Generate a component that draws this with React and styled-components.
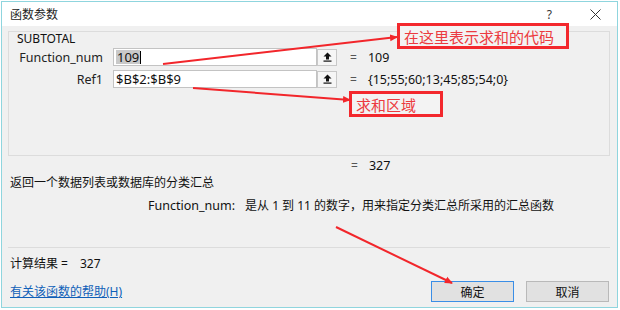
import React from 'react';
import styled, { createGlobalStyle } from 'styled-components';

const GlobalStyle = createGlobalStyle`
  html, body {
    margin: 0;
    padding: 0;
    background: #ffffff;
  }
  body {
    font-family: 'Noto Sans', 'Noto Sans CJK SC', sans-serif;
    font-size: 12px;
    color: #1a1a1a;
  }
`;

const args = [
  { name: 'Function_num', value: '109', result: '109', selected: true },
  { name: 'Ref1', value: '$B$2:$B$9', result: '{15;55;60;13;45;85;54;0}' },
];

const callouts = [
  { text: '在这里表示求和的代码', left: 397, top: 23, width: 172 },
  { text: '求和区域', left: 349, top: 91, width: 94 },
];

const arrows = [
  { x1: 163, y1: 64, x2: 397, y2: 37 },
  { x1: 193, y1: 88, x2: 350, y2: 100 },
  { x1: 336, y1: 227, x2: 452, y2: 283 },
];

export default function App() {
  return (
    <>
      <GlobalStyle />
      <Page>
        <Dialog>
          <TitleBar>
            <Title>函数参数</Title>
            <TitleTools>
              <HelpMark>?</HelpMark>
              <svg width="11" height="11" viewBox="0 0 11 11">
                <path d="M0.5 0.5 L10.5 10.5 M10.5 0.5 L0.5 10.5" stroke="#333" strokeWidth="1" />
              </svg>
            </TitleTools>
          </TitleBar>

          <Body>
            <GroupBox>
              <GroupTitle>SUBTOTAL</GroupTitle>
              <ArgList>
                {args.map((arg) => (
                  <ArgRow key={arg.name}>
                    <ArgLabel>{arg.name}</ArgLabel>
                    <Field>
                      {arg.selected ? (
                        <>
                          <Selection>{arg.value}</Selection>
                          <Caret />
                        </>
                      ) : (
                        arg.value
                      )}
                    </Field>
                    <CollapseButton>
                      <svg width="9" height="10" viewBox="0 0 9 10">
                        <path d="M4.5 0.5 L8.5 4.5 L6 4.5 L6 7.5 L3 7.5 L3 4.5 L0.5 4.5 Z" fill="#111" />
                        <rect x="0.5" y="8.5" width="8" height="1.2" fill="#111" />
                      </svg>
                    </CollapseButton>
                    <Equals>=</Equals>
                    <ArgResult>{arg.result}</ArgResult>
                  </ArgRow>
                ))}
              </ArgList>
            </GroupBox>

            <FormulaResult>
              <Equals>=</Equals>
              <ArgResult>327</ArgResult>
            </FormulaResult>

            <Description>返回一个数据列表或数据库的分类汇总</Description>

            <ArgHelp>
              <ArgHelpName>Function_num:</ArgHelpName>
              <span>是从 1 到 11 的数字，用来指定分类汇总所采用的汇总函数</span>
            </ArgHelp>

            <Separator />

            <Footer>
              <FooterInfo>
                <CalcResult>
                  计算结果 =<CalcValue>327</CalcValue>
                </CalcResult>
                <HelpLink href="#">有关该函数的帮助(H)</HelpLink>
              </FooterInfo>
              <Buttons>
                <DialogButton $primary>确定</DialogButton>
                <DialogButton>取消</DialogButton>
              </Buttons>
            </Footer>
          </Body>
        </Dialog>

        {callouts.map((c) => (
          <Callout key={c.text} style={{ left: c.left, top: c.top, width: c.width }}>
            {c.text}
          </Callout>
        ))}

        <ArrowLayer width="620" height="310" viewBox="0 0 620 310">
          <defs>
            <marker id="head" markerWidth="8" markerHeight="8" refX="7" refY="4" orient="auto" markerUnits="userSpaceOnUse">
              <path d="M0 0.5 L8 4 L0 7.5 Z" fill="#f2262b" />
            </marker>
          </defs>
          {arrows.map((a, i) => (
            <line
              key={i}
              x1={a.x1}
              y1={a.y1}
              x2={a.x2}
              y2={a.y2}
              stroke="#f2262b"
              strokeWidth="2"
              markerEnd="url(#head)"
            />
          ))}
        </ArrowLayer>
      </Page>
    </>
  );
}

const Page = styled.div`
  position: relative;
  width: 620px;
  height: 310px;
  padding: 1px 2px 2px 1px;
  box-sizing: border-box;
  overflow: hidden;
`;

const Dialog = styled.div`
  box-sizing: border-box;
  width: 617px;
  height: 307px;
  border: 1px solid #8fd5de;
  background: #f0f0f0;
  display: flex;
  flex-direction: column;
`;

const TitleBar = styled.div`
  height: 24px;
  flex: none;
  background: #ffffff;
  display: flex;
  align-items: center;
  justify-content: space-between;
  padding: 0 16px 0 8px;
`;

const Title = styled.div`
  font-size: 12px;
  color: #222;
`;

const TitleTools = styled.div`
  display: flex;
  align-items: center;
  gap: 38px;
`;

const HelpMark = styled.span`
  font-size: 12px;
  color: #333;
`;

const Body = styled.div`
  flex: 1;
  display: flex;
  flex-direction: column;
  padding: 0 7px 5px 6px;
`;

const GroupBox = styled.div`
  margin-top: 5px;
  height: 125px;
  box-sizing: border-box;
  border: 1px solid #dcdcdc;
  padding: 0 8px;
`;

const GroupTitle = styled.div`
  font-size: 12px;
  line-height: 14px;
  color: #111;
  margin-bottom: 2px;
`;

const ArgList = styled.div`
  display: flex;
  flex-direction: column;
  gap: 4px;
`;

const ArgRow = styled.div`
  display: flex;
  align-items: center;
  height: 18px;
`;

const ArgLabel = styled.div`
  width: 86px;
  margin-right: 10px;
  text-align: right;
  font-size: 12.5px;
  color: #222;
`;

const Field = styled.div`
  box-sizing: border-box;
  width: 204px;
  height: 18px;
  border: 1px solid #c3c3c3;
  background: #ffffff;
  display: flex;
  align-items: center;
  padding-left: 2px;
  font-size: 13px;
  color: #111;
`;

const Selection = styled.span`
  background: #c9c9c9;
  line-height: 14px;
  padding: 0 1px;
`;

const Caret = styled.span`
  width: 1px;
  height: 13px;
  background: #000;
`;

const CollapseButton = styled.div`
  box-sizing: border-box;
  width: 20px;
  height: 17px;
  border: 1px solid #c8c8c8;
  background: #f6f6f6;
  display: flex;
  align-items: center;
  justify-content: center;
`;

const Equals = styled.span`
  margin-left: 13px;
  color: #555;
  font-size: 12px;
`;

const ArgResult = styled.span`
  margin-left: 11px;
  font-size: 12.5px;
  color: #111;
`;

const FormulaResult = styled.div`
  margin-top: 3px;
  padding-left: 330px;
  line-height: 14px;
`;

const Description = styled.div`
  margin-top: 3px;
  padding-left: 2px;
  line-height: 14px;
  color: #111;
`;

const ArgHelp = styled.div`
  margin-top: 9px;
  padding-left: 140px;
  line-height: 14px;
  display: flex;
  gap: 10px;
  color: #111;
`;

const ArgHelpName = styled.span`
  font-size: 12.5px;
`;

const Separator = styled.div`
  margin-top: auto;
  height: 1px;
  background: #dcdcdc;
`;

const Footer = styled.div`
  height: 54px;
  display: flex;
  justify-content: space-between;
  align-items: flex-end;
  padding-right: 1px;
`;

const FooterInfo = styled.div`
  display: flex;
  flex-direction: column;
  gap: 14px;
  padding-left: 2px;
  padding-bottom: 3px;
`;

const CalcResult = styled.div`
  line-height: 14px;
  color: #111;
`;

const CalcValue = styled.span`
  margin-left: 12px;
`;

const HelpLink = styled.a`
  line-height: 14px;
  color: #0f5fb8;
  text-decoration: underline;
`;

const Buttons = styled.div`
  display: flex;
  gap: 12px;
`;

const DialogButton = styled.button`
  box-sizing: border-box;
  width: 83px;
  height: 21px;
  padding: 0;
  font-family: inherit;
  font-size: 12px;
  color: #111;
  background: #e1e1e1;
  border: 1px solid ${(p) => (p.$primary ? '#3a8ee6' : '#b9b9b9')};
`;

const Callout = styled.div`
  position: absolute;
  box-sizing: border-box;
  height: 26px;
  border: 3px solid #f3282d;
  background: #f3f3f3;
  padding-left: 4px;
  display: flex;
  align-items: center;
  font-size: 15px;
  color: #ec3b40;
  white-space: nowrap;
`;

const ArrowLayer = styled.svg`
  position: absolute;
  left: 0;
  top: 0;
  pointer-events: none;
`;
